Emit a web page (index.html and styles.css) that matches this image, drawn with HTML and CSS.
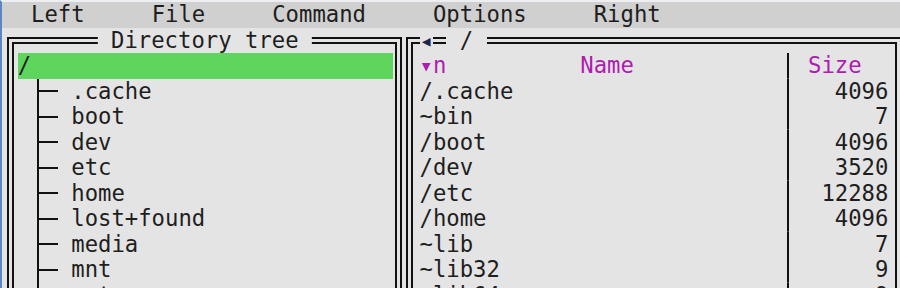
FILE: index.html
```html
<!DOCTYPE html>
<html lang="en">
<head>
<title>Directory tree</title>
<meta charset="utf-8">
<meta name="viewport" content="width=device-width, initial-scale=1">
<link rel="stylesheet" href="styles.css">
</head>
<body>

<div class="screen">
  <div class="menubar">
    <span>Left</span>
    <span>File</span>
    <span>Command</span>
    <span>Options</span>
    <span>Right</span>
  </div>

  <div class="panels">
    <!-- left: directory tree -->
    <div class="panel tree-panel">
      <div class="title">Directory tree</div>
      <div class="row current">/</div>
      <div class="row"><span class="branch"></span>.cache</div>
      <div class="row"><span class="branch"></span>boot</div>
      <div class="row"><span class="branch"></span>dev</div>
      <div class="row"><span class="branch"></span>etc</div>
      <div class="row"><span class="branch"></span>home</div>
      <div class="row"><span class="branch"></span>lost+found</div>
      <div class="row"><span class="branch"></span>media</div>
      <div class="row"><span class="branch"></span>mnt</div>
      <div class="row"><span class="branch"></span>opt</div>
    </div>

    <!-- right: file listing -->
    <div class="panel files-panel">
      <div class="path-bar"><span class="history">◂</span><span class="path">/</span></div>
      <div class="file-row header">
        <span class="name"><span class="sort">▾n</span><span class="col-title">Name</span></span>
        <span class="sep"></span>
        <span class="size">Size</span>
      </div>
      <div class="file-row"><span class="name">/.cache</span><span class="sep"></span><span class="size">4096</span></div>
      <div class="file-row"><span class="name">~bin</span><span class="sep"></span><span class="size">7</span></div>
      <div class="file-row"><span class="name">/boot</span><span class="sep"></span><span class="size">4096</span></div>
      <div class="file-row"><span class="name">/dev</span><span class="sep"></span><span class="size">3520</span></div>
      <div class="file-row"><span class="name">/etc</span><span class="sep"></span><span class="size">12288</span></div>
      <div class="file-row"><span class="name">/home</span><span class="sep"></span><span class="size">4096</span></div>
      <div class="file-row"><span class="name">~lib</span><span class="sep"></span><span class="size">7</span></div>
      <div class="file-row"><span class="name">~lib32</span><span class="sep"></span><span class="size">9</span></div>
      <div class="file-row"><span class="name">~lib64</span><span class="sep"></span><span class="size">9</span></div>
    </div>
  </div>
</div>

</body>
</html>
```

FILE: styles.css
```css
body {
  margin: 0;
  overflow: hidden;
  background: #e4e4e4;
  color: #1e1e1e;
  font-family: "DejaVu Sans Mono", monospace;
  font-size: 22.25px;
  line-height: 25.5px;
}

/* terminal window area */
.screen {
  height: 286px;
  border-top: 2px solid #eceef1;
  border-left: 2px solid #5a85c6;
  overflow: hidden;
}

/* Style the top menu */
.menubar {
  display: flex;
  gap: 5ch;
  height: 25.5px;
  padding-left: calc(2.3px + 2ch);
  background: #d0d0d0;
}

/* Two panels next to each other */
.panels {
  display: flex;
  gap: 3.5px;
  margin-top: 9px;
  padding-left: 5.3px;
}

.panel {
  position: relative;
  flex-shrink: 0;
  height: 400px;
  padding-top: 9.5px;
  border: 7px double #111;
}

.tree-panel {
  width: 28ch;
  padding-left: 3.4px;
  padding-right: 2.6px;
}

.files-panel {
  width: 35ch;
  padding-left: 6.7px;
  padding-right: 6.3px;
}

/* titles sitting on the top border */
.title {
  position: absolute;
  top: -16px;
  left: 50%;
  transform: translateX(-50%);
  padding: 0 1ch;
  background: #e4e4e4;
  white-space: nowrap;
}

.path-bar {
  position: absolute;
  top: -16px;
  left: 6.7px;
  display: flex;
}

.path-bar span {
  background: #e4e4e4;
}

.history {
  width: 1ch;
  margin-right: 1ch;
  text-align: center;
  color: #1b2550;
}

.path {
  padding: 0 1ch;
}

/* tree rows */
.row {
  display: flex;
  height: 25.5px;
  padding-left: 1ch;
  white-space: pre;
}

.row.current {
  padding-left: 0;
  background: #5ed65e;
}

.branch {
  width: 2ch;
  margin-right: 1ch;
  background:
    linear-gradient(#111, #111) calc(0.5ch - 1px) 0 / 2px 100% no-repeat,
    linear-gradient(#111, #111) calc(0.5ch - 1px) 50% / calc(1.5ch + 1px) 2px no-repeat;
}

/* file listing rows */
.file-row {
  display: grid;
  grid-template-columns: 27ch 1ch 7ch;
  height: 25.5px;
  white-space: pre;
}

.sep {
  background: linear-gradient(#111, #111) center / 2px 100% no-repeat;
}

.size {
  text-align: right;
}

.header {
  color: #b01cb0;
}

.header .size {
  padding-left: 1ch;
  text-align: left;
}

.col-title {
  margin-left: 10ch;
}
```
